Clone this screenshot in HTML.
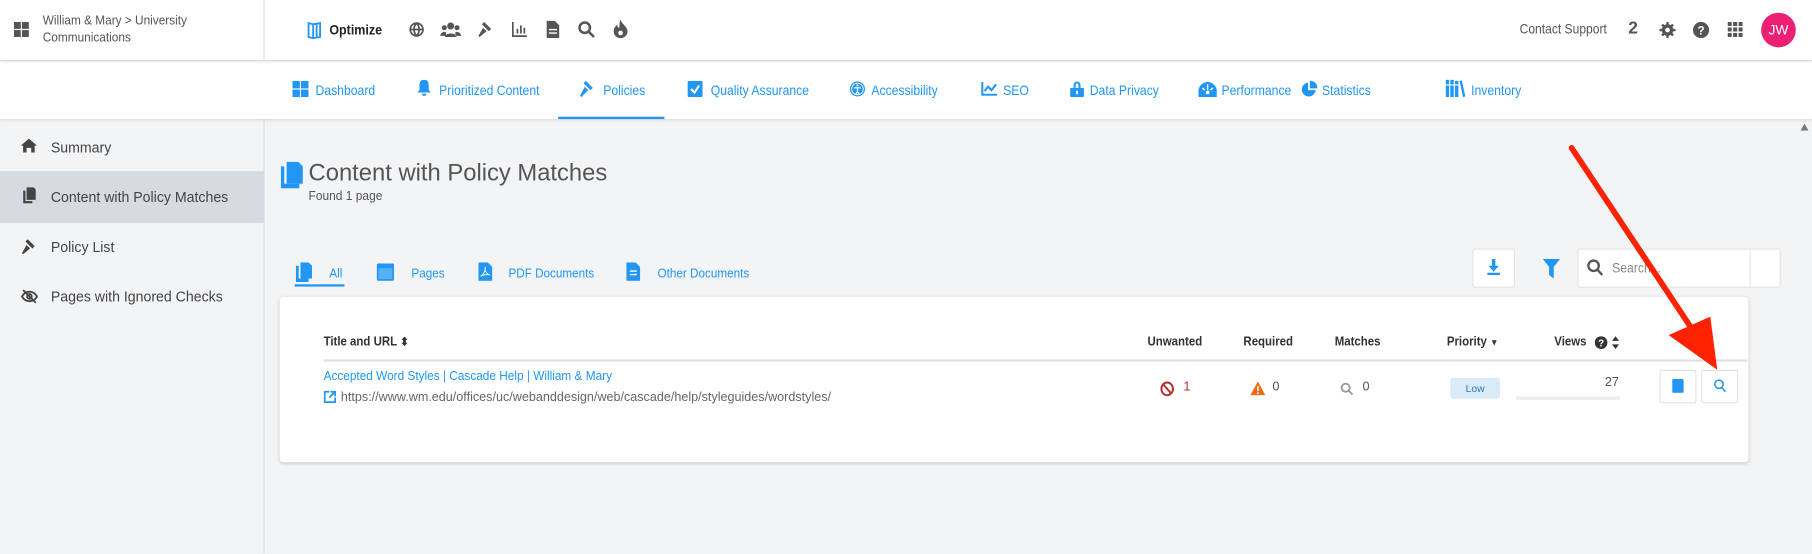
<!DOCTYPE html>
<html><head><meta charset="utf-8"><style>
html,body{margin:0;padding:0;width:1812px;height:554px;overflow:hidden;background:#f3f4f6}
#w{position:absolute;left:0;top:0;width:1568px;height:479px;transform:scale(1.15561);transform-origin:0 0;font-family:"Liberation Sans",sans-serif;color:#444;background:#f3f4f6}
.a{position:absolute;white-space:nowrap}
svg{position:absolute}
.hdr{position:absolute;left:0;top:0;width:1568px;height:52px;background:#fff;box-shadow:0 1px 3px rgba(0,0,0,.18);z-index:3}
.nav{position:absolute;left:0;top:53px;width:1568px;height:50px;background:#fff;box-shadow:0 1px 3px rgba(0,0,0,.15);z-index:2}
.nv{position:absolute;white-space:nowrap;top:71px;font-size:12px;color:#2196f3;transform:scaleX(.88);transform-origin:0 0}
.side{position:absolute;left:0;top:103px;width:228px;height:376px;border-right:1px solid #dcdcdc;background:#f3f4f6}
.si{position:absolute;white-space:nowrap;left:44px;font-size:13px;color:#444;transform:scaleX(.94);transform-origin:0 0}
.tab{position:absolute;white-space:nowrap;top:231px;font-size:11.5px;color:#2196f3;transform:scaleX(.88);transform-origin:0 0}
.th{position:absolute;white-space:nowrap;top:290px;font-size:11px;font-weight:bold;color:#333;transform:scaleX(.9);transform-origin:0 0}
</style></head><body><div id="w">
<div class="hdr">
 <div class="a" style="left:228px;top:0;width:1px;height:52px;background:#ddd"></div>
 <svg style="left:12px;top:19px" width="13" height="13" viewBox="0 0 13 13" fill="#555"><rect width="6" height="6"/><rect x="7" width="6" height="6"/><rect y="7" width="6" height="6"/><rect x="7" y="7" width="6" height="6"/></svg>
 <div class="a" style="left:37px;top:11px;font-size:11px;line-height:15px;color:#555;transform:scaleX(.93);transform-origin:0 0">William &amp; Mary &gt; University<br>Communications</div>
 <svg style="left:265px;top:18px" width="14" height="16" viewBox="0 0 14 16" fill="none" stroke="#2196f3" stroke-width="1.6"><path d="M2 2l4 1v12l-4-1z M6 3l6-1v12l-6 1 M9 2.5v12"/></svg>
 <div class="a" style="left:285px;top:19px;font-size:12px;font-weight:bold;color:#222;transform:scaleX(.9);transform-origin:0 0">Optimize</div>
 <svg style="left:354px;top:19px" width="13" height="13" viewBox="0 0 13 13" fill="none" stroke="#555" stroke-width="1.5"><circle cx="6.5" cy="6.5" r="5.5"/><path d="M1 6.5h11M6.5 1c-3 3-3 8 0 11c3-3 3-8 0-11"/></svg>
 <svg style="left:381px;top:19px" width="18" height="13" viewBox="0 0 18 13" fill="#555"><circle cx="9" cy="3.5" r="3"/><circle cx="3.5" cy="5" r="2.2"/><circle cx="14.5" cy="5" r="2.2"/><path d="M4 13c0-4 10-4 10 0zM0 12c0-3 4-4 5-3v3zM18 12c0-3-4-4-5-3v3z"/></svg>
 <svg style="left:413px;top:18px" width="14" height="14" viewBox="0 0 14 14" fill="#555"><path d="M6 1l6 6-2 2-6-6zM5 6l3 3-6 5-1-1z"/></svg>
 <svg style="left:443px;top:19px" width="13" height="13" viewBox="0 0 13 13" fill="#555"><path d="M0 0h1.5v11.5H13V13H0z"/><rect x="4" y="6" width="1.5" height="4"/><rect x="7" y="3" width="1.5" height="7"/><rect x="10" y="5" width="1.5" height="5"/></svg>
 <svg style="left:473px;top:18px" width="11" height="15" viewBox="0 0 11 15" fill="#555"><path d="M0 0h7l4 4v11H0z"/><rect x="2" y="7" width="7" height="1.2" fill="#fff"/><rect x="2" y="10" width="7" height="1.2" fill="#fff"/></svg>
 <svg style="left:500px;top:18px" width="15" height="15" viewBox="0 0 15 15" fill="none" stroke="#555" stroke-width="2.2"><circle cx="6" cy="6" r="4.5"/><path d="M9.5 9.5l4.5 4.5"/></svg>
 <svg style="left:531px;top:17px" width="12" height="16" viewBox="0 0 12 16" fill="#555"><path d="M6 0c1 4 6 6 6 10a6 6 0 0 1-12 0c0-3 2-4 3-6 0 2 1 3 2 3 0-2 0-5 1-7z"/><circle cx="6" cy="11.5" r="2" fill="#fff"/></svg>
 <div class="a" style="left:1315px;top:18px;font-size:12px;color:#555;transform:scaleX(.87);transform-origin:0 0">Contact Support</div>
 <div class="a" style="left:1409px;top:16px;font-size:15px;font-weight:bold;color:#555">2</div>
 <svg style="left:1436px;top:19px" width="14" height="14" viewBox="0 0 14 14" fill="#555"><circle cx="7" cy="7" r="5"/><path d="M6 0h2v14H6zM0 6h14v2H0zM1.5 3l1.5-1.5 9.5 9.5-1.5 1.5zM11 1.5l1.5 1.5-9.5 9.5-1.5-1.5z"/><circle cx="7" cy="7" r="2" fill="#fff"/></svg>
 <svg style="left:1465px;top:19px" width="14" height="14" viewBox="0 0 14 14"><circle cx="7" cy="7" r="7" fill="#555"/><text x="7" y="11" font-size="10" font-weight="bold" fill="#fff" text-anchor="middle" font-family="Liberation Sans">?</text></svg>
 <svg style="left:1495px;top:19px" width="13" height="13" viewBox="0 0 13 13" fill="#555"><rect width="3.5" height="3.5"/><rect x="4.75" width="3.5" height="3.5"/><rect x="9.5" width="3.5" height="3.5"/><rect y="4.75" width="3.5" height="3.5"/><rect x="4.75" y="4.75" width="3.5" height="3.5"/><rect x="9.5" y="4.75" width="3.5" height="3.5"/><rect y="9.5" width="3.5" height="3.5"/><rect x="4.75" y="9.5" width="3.5" height="3.5"/><rect x="9.5" y="9.5" width="3.5" height="3.5"/></svg>
 <div class="a" style="left:1524px;top:11px;width:30px;height:30px;border-radius:50%;background:#ec1f74;color:#fff;font-size:12px;line-height:30px;text-align:center">JW</div>
</div>
<div class="nav">
 <div class="a" style="left:483px;top:48px;width:92px;height:2px;background:#2196f3"></div>
</div>
<div style="position:absolute;left:0;top:0;z-index:4">
 <svg style="left:253px;top:70px" width="14" height="14" viewBox="0 0 14 14" fill="#2196f3"><rect width="6.5" height="6.5"/><rect x="7.5" width="6.5" height="6.5"/><rect y="7.5" width="6.5" height="6.5"/><rect x="7.5" y="7.5" width="6.5" height="6.5"/></svg>
 <div class="nv" style="left:273px">Dashboard</div>
 <svg style="left:361px;top:69px" width="12" height="15" viewBox="0 0 12 15" fill="#2196f3"><path d="M6 0c3 0 4 2 4 5v4l2 2H0l2-2V5c0-3 1-5 4-5zM4 12h4a2 2 0 0 1-4 0z"/></svg>
 <div class="nv" style="left:380px">Prioritized Content</div>
 <svg style="left:501px;top:69px" width="14" height="15" viewBox="0 0 14 15" fill="#2196f3"><path d="M6 1l6 6-2 2-6-6zM5 6l3 3-6 6-1-1z"/></svg>
 <div class="nv" style="left:522px">Policies</div>
 <svg style="left:595px;top:70px" width="13" height="14" viewBox="0 0 13 14"><rect width="13" height="14" rx="1" fill="#2196f3"/><path d="M3 7l3 3 4-6" stroke="#fff" stroke-width="1.8" fill="none"/></svg>
 <div class="nv" style="left:615px">Quality Assurance</div>
 <svg style="left:735px;top:70px" width="14" height="14" viewBox="0 0 14 14"><circle cx="7" cy="7" r="6.5" fill="#2196f3"/><circle cx="7" cy="7" r="5" fill="none" stroke="#fff" stroke-width=".8"/><circle cx="7" cy="4" r="1" fill="#fff"/><path d="M4 6h6M7 6v3l-1.5 3M7 9l1.5 3" stroke="#fff" stroke-width="1.1" fill="none"/></svg>
 <div class="nv" style="left:754px">Accessibility</div>
 <svg style="left:849px;top:71px" width="14" height="12" viewBox="0 0 14 12" fill="none" stroke="#2196f3" stroke-width="1.8"><path d="M1 0v11h13M3 8l3-4 3 3 4-5"/></svg>
 <div class="nv" style="left:868px">SEO</div>
 <svg style="left:926px;top:69px" width="12" height="15" viewBox="0 0 12 15" fill="#2196f3"><path d="M3 7V4.5a3 3 0 0 1 6 0V7h-1.8V4.5a1.2 1.2 0 0 0-2.4 0V7z"/><rect y="7" width="12" height="8" rx="1"/><rect x="5.2" y="9.5" width="1.6" height="3" fill="#fff"/></svg>
 <div class="nv" style="left:943px">Data Privacy</div>
 <svg style="left:1037px;top:70px" width="16" height="14" viewBox="0 0 16 14" fill="#2196f3"><path d="M0 9a8 8 0 0 1 16 0v5H0z"/><path d="M8 3v5M3.5 6l2 2M12.5 6l-2 2" stroke="#fff" stroke-width="1.2"/><circle cx="8" cy="10" r="1.6" fill="#fff"/></svg>
 <div class="nv" style="left:1057px">Performance</div>
 <svg style="left:1126px;top:70px" width="14" height="14" viewBox="0 0 14 14" fill="#2196f3"><path d="M6 1.5A6 6 0 1 0 12.5 8H6z"/><path d="M7.5 0A6 6 0 0 1 14 6.5H7.5z"/></svg>
 <div class="nv" style="left:1144px">Statistics</div>
 <svg style="left:1251px;top:69px" width="17" height="15" viewBox="0 0 17 15" fill="#2196f3"><rect width="3" height="15"/><rect x="4" width="3" height="15"/><rect x="8" y="1" width="3" height="14"/><path d="M12 1l2-.5 3 14-2 .5z"/><rect x="0" y="4" width="11" height="1" fill="#fff"/></svg>
 <div class="nv" style="left:1273px">Inventory</div>
</div>

<div class="side">
 <div class="a" style="left:0;top:45px;width:228px;height:45px;background:#d5dbe1"></div>
</div>
<svg style="left:18px;top:120px" width="14" height="12" viewBox="0 0 14 12" fill="#444"><path d="M7 0l7 6h-2v6H9V8H5v4H2V6H0z"/></svg>
<div class="si" style="top:120px">Summary</div>
<svg style="left:20px;top:162px" width="11" height="14" viewBox="0 0 11 14" fill="#444"><path d="M3 0h6l2 2v9H3z"/><path d="M0 3h2v9h6v2H0z"/></svg>
<div class="si" style="top:163px">Content with Policy Matches</div>
<svg style="left:18px;top:206px" width="14" height="14" viewBox="0 0 14 14" fill="#444"><path d="M6 1l6 6-2 2-6-6zM5 6l3 3-6 5-1-1z"/></svg>
<div class="si" style="top:206px">Policy List</div>
<svg style="left:18px;top:250px" width="15" height="13" viewBox="0 0 15 13" fill="none" stroke="#444" stroke-width="1.6"><path d="M1 6.5C4 1 11 1 14 6.5C11 12 4 12 1 6.5z"/><circle cx="7.5" cy="6.5" r="2"/><path d="M2 1l11 11"/></svg>
<div class="si" style="top:249px">Pages with Ignored Checks</div>

<svg style="left:243px;top:140px" width="20" height="23" viewBox="0 0 20 23" fill="#2196f3"><path d="M5 0h10l4 4v15H5z"/><path d="M0 4h3v15h13v4H0z"/></svg>
<div class="a" style="left:267px;top:138px;font-size:21px;color:#555;transform:scaleX(.98);transform-origin:0 0">Content with Policy Matches</div>
<div class="a" style="left:267px;top:164px;font-size:11.5px;color:#555;transform:scaleX(.9);transform-origin:0 0">Found 1 page</div>

<svg style="left:256px;top:227px" width="15" height="17" viewBox="0 0 15 17" fill="#2196f3"><path d="M4 0h7l3 3v11H4z"/><path d="M0 3h2.5v11H11v3H0z"/></svg>
<div class="tab" style="left:285px">All</div>
<div class="a" style="left:255px;top:246px;width:43px;height:2px;background:#2196f3"></div>
<svg style="left:326px;top:228px" width="15" height="15" viewBox="0 0 15 15" fill="#2196f3"><rect width="15" height="15" rx="1.5"/><rect x="1.5" y="4" width="12" height="9.5" fill="#fff" opacity=".25"/></svg>
<div class="tab" style="left:356px">Pages</div>
<svg style="left:414px;top:227px" width="12" height="16" viewBox="0 0 12 16" fill="#2196f3"><path d="M0 0h8l4 4v12H0z"/><path d="M6 4c-1 3 1 6 4 7M6 4c0 4-2 7-4 8M2 12c2-1 5-2 8-1" stroke="#fff" stroke-width=".8" fill="none"/></svg>
<div class="tab" style="left:440px">PDF Documents</div>
<svg style="left:542px;top:227px" width="12" height="16" viewBox="0 0 12 16" fill="#2196f3"><path d="M0 0h8l4 4v12H0z"/><rect x="3" y="7" width="6" height="1.2" fill="#fff"/><rect x="3" y="10" width="6" height="1.2" fill="#fff"/></svg>
<div class="tab" style="left:569px">Other Documents</div>

<div class="a" style="left:1274px;top:215px;width:37px;height:34px;background:#fff;border:1px solid #e3e3e3;border-radius:2px;box-sizing:border-box"></div>
<svg style="left:1287px;top:224px" width="11" height="14" viewBox="0 0 11 14" fill="#2196f3"><path d="M4 0h3v6h3l-4.5 5L1 6h3z"/><rect y="12" width="11" height="2"/></svg>
<svg style="left:1335px;top:224px" width="15" height="17" viewBox="0 0 15 17" fill="#2196f3"><path d="M0 0h15l-5.5 7v10l-4-3V7z"/></svg>
<div class="a" style="left:1365px;top:215px;width:176px;height:34px;background:#fff;border:1px solid #e3e3e3;border-radius:2px;box-sizing:border-box"></div>
<div class="a" style="left:1514px;top:215px;width:1px;height:34px;background:#e8e8e8"></div>
<svg style="left:1373px;top:224px" width="14" height="15" viewBox="0 0 14 15" fill="none" stroke="#555" stroke-width="2"><circle cx="6" cy="6" r="4.5"/><path d="M9.5 9.5l4 4.5"/></svg>
<div class="a" style="left:1395px;top:225px;font-size:12px;color:#888;transform:scaleX(.88);transform-origin:0 0">Search...</div>

<div class="a" style="left:242px;top:257px;width:1271px;height:143px;background:#fff;border-radius:3px;box-shadow:0 1px 3px rgba(0,0,0,.2)"></div>
<div class="th" style="left:280px">Title and URL <span style="font-size:10px">&#x2B0D;</span></div>
<div class="th" style="left:993px">Unwanted</div>
<div class="th" style="left:1076px">Required</div>
<div class="th" style="left:1155px">Matches</div>
<div class="th" style="left:1252px">Priority <span style="font-size:8px">&#9660;</span></div>
<div class="th" style="left:1345px">Views</div>
<svg style="left:1380px;top:291px" width="11" height="11" viewBox="0 0 11 11"><circle cx="5.5" cy="5.5" r="5.5" fill="#333"/><text x="5.5" y="9" font-size="8.5" font-weight="bold" fill="#fff" text-anchor="middle" font-family="Liberation Sans">?</text></svg>
<svg style="left:1395px;top:291px" width="6" height="11" viewBox="0 0 6 11" fill="#333"><path d="M3 0l3 4H0zM3 11l3-4H0z"/></svg>
<div class="a" style="left:280px;top:311px;width:1232px;height:2px;background:#e1e1e1"></div>
<div class="a" style="left:280px;top:320px;font-size:11px;color:#2196f3;transform:scaleX(.93);transform-origin:0 0">Accepted Word Styles | Cascade Help | William &amp; Mary</div>
<svg style="left:280px;top:338px" width="11" height="11" viewBox="0 0 11 11" fill="none" stroke="#2196f3" stroke-width="1.5"><path d="M5 1H1v9h9V6M6 1h4v4M10 1L5 6"/></svg>
<div class="a" style="left:295px;top:338px;font-size:11px;color:#666;transform:scaleX(.99);transform-origin:0 0">https://www.wm.edu/offices/uc/webanddesign/web/cascade/help/styleguides/wordstyles/</div>
<svg style="left:1004px;top:330px" width="12" height="13" viewBox="0 0 12 13" fill="none" stroke="#b03030" stroke-width="1.7"><ellipse cx="6" cy="6.5" rx="5" ry="5.5"/><path d="M2.5 2.5l7 8"/></svg>
<div class="a" style="left:1024px;top:329px;font-size:11px;color:#a33">1</div>
<svg style="left:1082px;top:330px" width="13" height="12" viewBox="0 0 13 12"><path d="M6.5 0L13 12H0z" fill="#f26a0e"/><rect x="5.8" y="4" width="1.4" height="4.5" fill="#fff"/><rect x="5.8" y="9.5" width="1.4" height="1.4" fill="#fff"/></svg>
<div class="a" style="left:1101px;top:329px;font-size:11px;color:#555">0</div>
<svg style="left:1160px;top:331px" width="11" height="11" viewBox="0 0 11 11" fill="none" stroke="#999" stroke-width="1.6"><circle cx="4.5" cy="4.5" r="3.5"/><path d="M7 7l3.5 3.5"/></svg>
<div class="a" style="left:1179px;top:329px;font-size:11px;color:#555">0</div>
<div class="a" style="left:1255px;top:327px;width:43px;height:18px;background:#d9ebf7;border-radius:2px;font-size:9px;color:#2a7ab8;text-align:center;line-height:18px">Low</div>
<div class="a" style="left:1380px;top:325px;width:21px;text-align:right;font-size:11px;color:#555">27</div>
<div class="a" style="left:1312px;top:343px;width:90px;height:3px;background:#eee"></div>
<div class="a" style="left:1436px;top:320px;width:32px;height:29px;border:1px solid #e3e3e3;box-sizing:border-box;border-radius:2px"></div>
<svg style="left:1447px;top:328px" width="10" height="12" viewBox="0 0 10 12" fill="#2196f3"><rect width="10" height="12" rx="1"/></svg>
<div class="a" style="left:1472px;top:320px;width:32px;height:29px;border:1px solid #e3e3e3;box-sizing:border-box;border-radius:2px"></div>
<svg style="left:1483px;top:328px" width="11" height="12" viewBox="0 0 11 12" fill="none" stroke="#2196f3" stroke-width="1.3"><circle cx="4.5" cy="4.5" r="3.6"/><path d="M7 7.3l3 3.7"/></svg>

<div class="a" style="left:1553px;top:103px;width:15px;height:376px;background:#f3f4f6"></div>
<svg style="left:1558px;top:107px" width="7" height="6" viewBox="0 0 7 6" fill="#777"><path d="M3.5 0L7 6H0z"/></svg>

<svg style="left:0;top:0;z-index:10" width="1568" height="479"><line x1="1360" y1="128" x2="1469" y2="292" stroke="#f20" stroke-width="5" stroke-linecap="round"/><path d="M1486 320L1444 290L1480 274z" fill="#f20"/></svg>
</div></body></html>
